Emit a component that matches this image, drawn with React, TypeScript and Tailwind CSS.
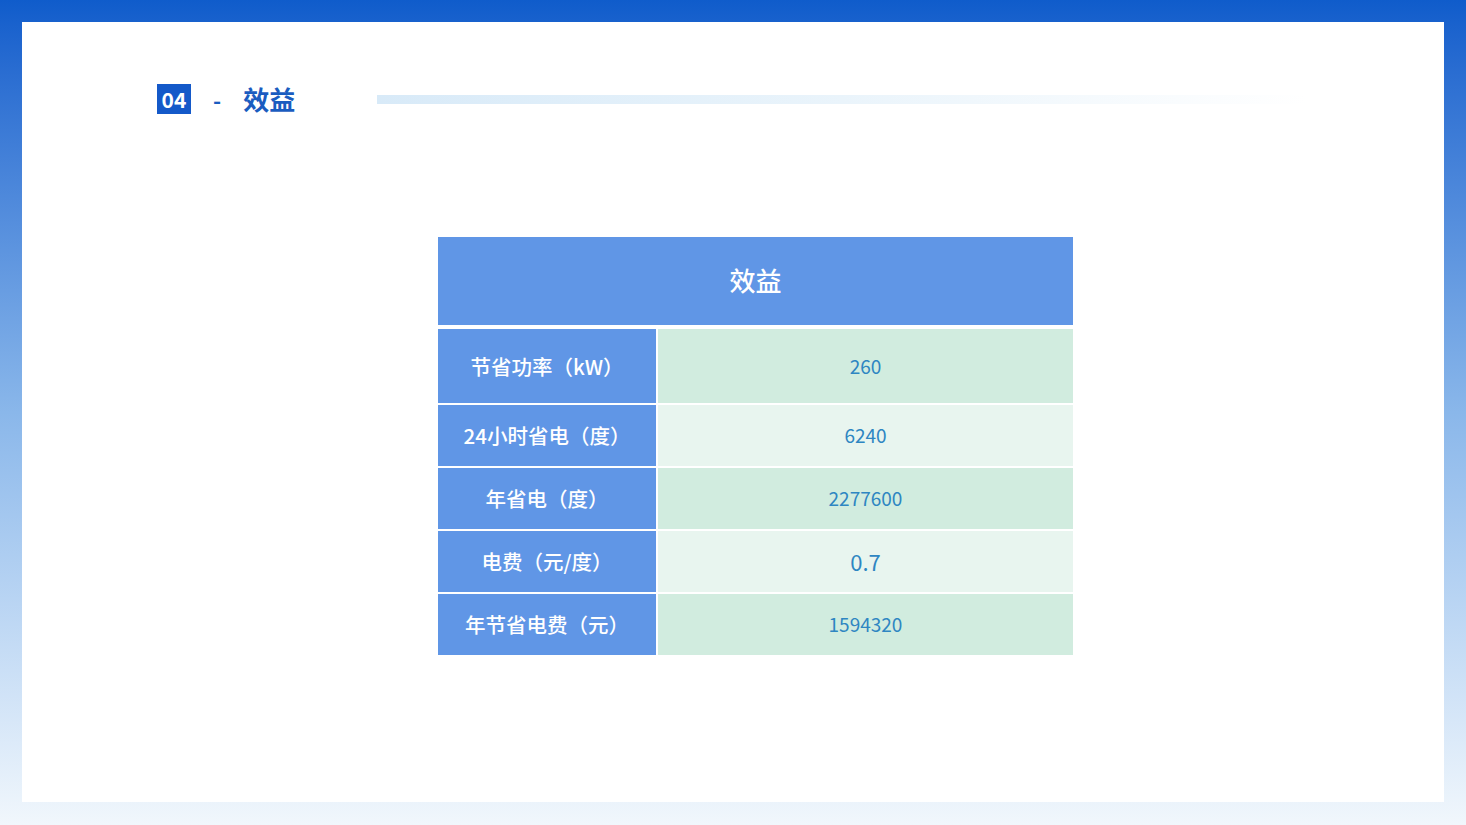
import React from 'react'

const rows = [
  { label: '节省功率（kW）', value: '260', tone: 'dark', h: 'h-[74px]', size: 'text-[19px]' },
  { label: '24小时省电（度）', value: '6240', tone: 'light', h: 'h-[61px]', size: 'text-[19px]' },
  { label: '年省电（度）', value: '2277600', tone: 'dark', h: 'h-[61px]', size: 'text-[19px]' },
  { label: '电费（元/度）', value: '0.7', tone: 'light', h: 'h-[61px]', size: 'text-[22px]' },
  { label: '年节省电费（元）', value: '1594320', tone: 'dark', h: 'h-[61px]', size: 'text-[19px]' },
]

export default function App() {
  return (
    <div
      className="w-[1466px] h-[825px] bg-gradient-to-b from-[#0f5ccb] via-[#8ab7ea] to-[#f1f7fc] p-[22px] pb-[23px]"
      style={{ fontFamily: '"Noto Sans CJK SC", "Noto Sans", sans-serif' }}
    >
      <div className="w-full h-full bg-white flex flex-col">
        {/* Title bar */}
        <div className="flex items-center h-[60px] mt-[47px] pl-[135px]">
          <div className="w-[34px] h-[30px] bg-[#1459c9] text-white font-bold text-[21px] flex items-center justify-center leading-none">
            04
          </div>
          <span className="ml-[22px] text-[#1a5cc0] font-bold text-[22px]">-</span>
          <span className="ml-[22px] text-[#1a5cc0] font-bold text-[26px] leading-none">效益</span>
          <div className="ml-[82px] w-[930px] h-[9px] bg-gradient-to-r from-[#d8eaf8] via-[#eaf4fb] to-transparent" />
        </div>

        {/* Table */}
        <div className="mt-[108px] ml-[416px] w-[635px] flex flex-col">
          <div className="h-[88px] bg-[#6096e6] text-white text-[26px] font-medium flex items-center justify-center pb-[3px]">
            效益
          </div>
          <div className="h-[4px]" />
          <div className="flex flex-col gap-[2px]">
            {rows.map((r) => (
              <div key={r.label} className={`flex gap-[2px] ${r.h}`}>
                <div className="w-[218px] bg-[#6096e6] text-white text-[20.5px] font-medium flex items-center justify-center">
                  {r.label}
                </div>
                <div
                  className={`flex-1 flex items-center justify-center text-[#2e86c2] ${r.size} ${
                    r.tone === 'dark' ? 'bg-[#d1ecdf]' : 'bg-[#e8f5ef]'
                  }`}
                >
                  {r.value}
                </div>
              </div>
            ))}
          </div>
        </div>
      </div>
    </div>
  )
}
